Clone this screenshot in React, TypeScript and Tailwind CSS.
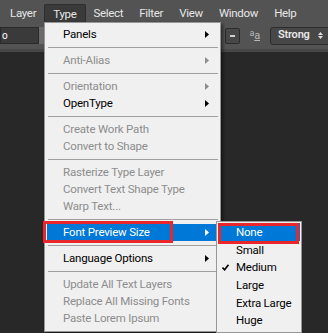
import React from "react";

type Item =
    | { kind: "sep" }
    | { kind: "item"; label: string; disabled?: boolean; sub?: boolean; active?: boolean };

const items: Item[] = [
    { kind: "item", label: "Panels", sub: true },
    { kind: "sep" },
    { kind: "item", label: "Anti-Alias", sub: true, disabled: true },
    { kind: "sep" },
    { kind: "item", label: "Orientation", sub: true, disabled: true },
    { kind: "item", label: "OpenType", sub: true },
    { kind: "sep" },
    { kind: "item", label: "Create Work Path", disabled: true },
    { kind: "item", label: "Convert to Shape", disabled: true },
    { kind: "sep" },
    { kind: "item", label: "Rasterize Type Layer", disabled: true },
    { kind: "item", label: "Convert Text Shape Type", disabled: true },
    { kind: "item", label: "Warp Text...", disabled: true },
    { kind: "sep" },
    { kind: "item", label: "Font Preview Size", sub: true, active: true },
    { kind: "sep" },
    { kind: "item", label: "Language Options", sub: true },
    { kind: "sep" },
    { kind: "item", label: "Update All Text Layers", disabled: true },
    { kind: "item", label: "Replace All Missing Fonts", disabled: true },
    { kind: "item", label: "Paste Lorem Ipsum", disabled: true },
];

const sizes = ["None", "Small", "Medium", "Large", "Extra Large", "Huge"];

const Arrow = ({ color }: { color: string }) => (
    <svg width="4" height="7" viewBox="0 0 4 7" className="absolute right-[9px] top-[5px]">
        <path d="M0 0 L4 3.5 L0 7 Z" fill={color} />
    </svg>
);

const App: React.FC = () => {
    return (
        <div
            className="relative w-[328px] h-[333px] overflow-hidden bg-[#282828] text-[11.5px] tracking-[-0.2px]"
            style={{ fontFamily: 'Roboto, "Open Sans", sans-serif' }}
        >
            {/* menu bar */}
            <div className="flex h-[22px] items-end bg-[#535353] pl-[2px] text-[11.5px] tracking-[-0.3px] text-[#e6e6e6]">
                {["Layer", "Type", "Select", "Filter", "View", "Window", "Help"].map((m) => (
                    <span
                        key={m}
                        className={
                            m === "Type"
                                ? "h-[18px] px-2 leading-[19px] bg-[#3a3a3a] border border-b-0 border-[#2e2e2e] rounded-t-[2px]"
                                : "h-[18px] px-2 leading-[19px]"
                        }
                    >
                        {m}
                    </span>
                ))}
            </div>

            {/* options bar */}
            <div className="flex h-[30px] items-center bg-[#535353] border-b-[3px] border-[#474747]">
                <div className="flex h-[17px] w-[39px] items-center bg-[#3a3a3a] border border-[#2a2a2a] pl-px text-[10px] text-white">
                    o
                </div>
                <div className="h-[17px] w-[6px] bg-[#6b6b6b]" />
                <div className="ml-auto mr-[-6px] flex items-center gap-[10px]">
                    <div className="flex h-[16px] w-[15px] items-center justify-center rounded-[2px] border border-[#2c2c2c] bg-[#474747]">
                        <div className="h-[2px] w-[5px] bg-[#cfcfcf]" />
                    </div>
                    <span className="text-[11px] text-[#b8b8b8] leading-none">
                        <span className="relative top-[-3px] text-[9px]">a</span>
                        <span className="underline">a</span>
                    </span>
                    <div className="flex h-[18px] w-[64px] items-center rounded-[3px] border border-[#2c2c2c] bg-[#474747] pl-[7px] text-[11px] font-semibold text-[#e8e8e8]">
                        Strong
                        <span className="ml-auto mr-[10px] flex flex-col gap-px">
                            <svg width="5" height="3" viewBox="0 0 5 3"><path d="M0 3 L2.5 0 L5 3Z" fill="#ddd" /></svg>
                            <svg width="5" height="3" viewBox="0 0 5 3"><path d="M0 0 L2.5 3 L5 0Z" fill="#ddd" /></svg>
                        </span>
                    </div>
                </div>
            </div>

            {/* Type menu */}
            <div className="absolute left-[44px] top-[22px] w-[177px] bg-[#f0f0f0] border border-[#979797] pt-[3px] pb-[4px] shadow-[2px_2px_3px_rgba(0,0,0,0.5)]">
                {items.map((it, i) =>
                    it.kind === "sep" ? (
                        <div key={i} className="flex h-[9px] items-center pl-[3px] pr-[2px]">
                            <div className="h-px w-full bg-[#a0a0a0]" />
                        </div>
                    ) : (
                        <div
                            key={i}
                            className={
                                "relative mx-[2px] h-[17px] pl-[16px] leading-[17px] " +
                                (it.active ? "bg-[#0078d7] text-white" : it.disabled ? "text-[#8d8d8d]" : "text-black")
                            }
                        >
                            {it.label}
                            {it.sub && <Arrow color={it.active ? "#fff" : it.disabled ? "#8d8d8d" : "#000"} />}
                        </div>
                    )
                )}
            </div>

            {/* red outline on Font Preview Size */}
            <div className="absolute left-[43px] top-[221px] h-[22px] w-[130px] border-[3px] border-[#e8262c]" />

            {/* submenu */}
            <div className="absolute left-[216px] top-[221px] w-[86px] bg-[#f0f0f0] border border-[#979797] pt-[1px] pb-[3px]">
                {sizes.map((s) => (
                    <div
                        key={s}
                        className={
                            "relative mx-[1px] h-[17.7px] pl-[18px] leading-[18px] " +
                            (s === "None" ? "bg-[#0078d7] text-white" : "text-black")
                        }
                    >
                        {s === "Medium" && (
                            <svg width="7" height="7" viewBox="0 0 7 7" className="absolute left-[4px] top-[6px]">
                                <path d="M0.5 3.5 L2.6 5.8 L6.5 0.8" stroke="#000" strokeWidth="1.6" fill="none" />
                            </svg>
                        )}
                        {s}
                    </div>
                ))}
                <div className="absolute left-[1px] top-[1px] h-[21px] w-[81px] border-[3px] border-[#e8262c]" />
            </div>
        </div>
    );
};

export default App;
